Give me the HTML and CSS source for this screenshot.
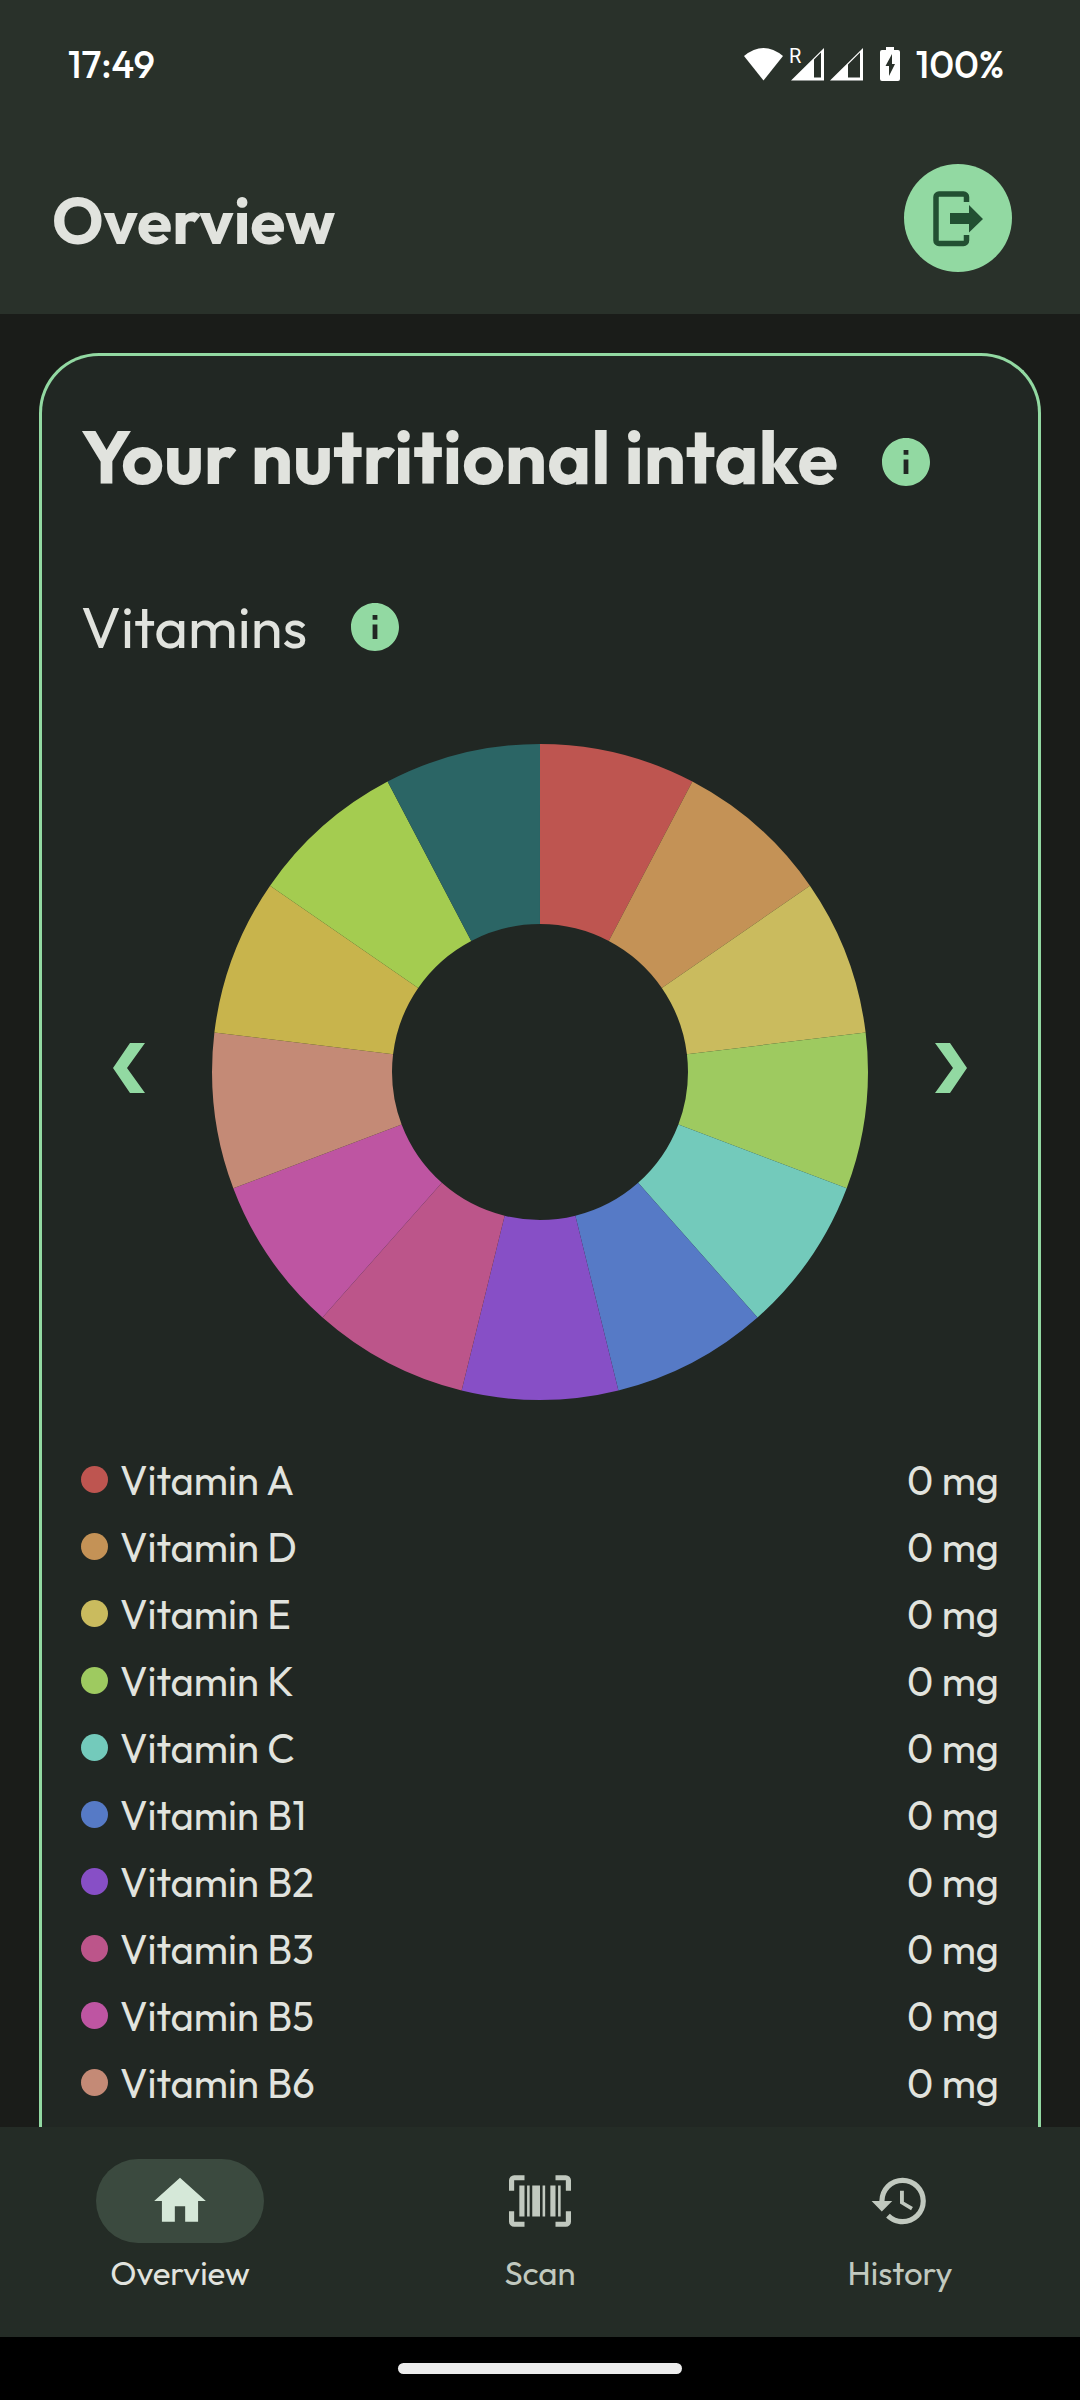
FILE: index.html
```html
<!DOCTYPE html>
<html lang="en">
<head>
<meta charset="utf-8">
<meta name="viewport" content="width=device-width, initial-scale=1">
<title>Overview</title>
<link rel="stylesheet" href="styles.css">
</head>
<body>
<header class="header">
  <div class="status">
    <span class="status-text">17:49</span>
    <div class="status-icons">
      <svg class="signals" width="120" height="36" viewBox="0 0 120 36" fill="#fff" aria-hidden="true">
        <path d="M0 10Q19.500-6 39 10L19.500 34.500Z"/>
        <text x="45" y="17" class="roaming">R</text>
        <path fill-rule="evenodd" d="M47 34.500 80 2v32.500ZM70 13.500v18h7v-25Z"/>
        <path fill-rule="evenodd" d="M86 34.500 119 2v32.500ZM104 18.500v13h12v-25Z"/>
      </svg>
      <svg width="20" height="36" viewBox="0 0 20 36" fill="#fff" aria-hidden="true">
        <path fill-rule="evenodd" d="M6 1h8v3h4a2 2 0 0 1 2 2v27a2 2 0 0 1-2 2H2a2 2 0 0 1-2-2V6a2 2 0 0 1 2-2h4ZM12 8 5.500 20H9v10l6-12h-3Z"/>
      </svg>
      <span class="status-text">100%</span>
    </div>
  </div>
  <div class="app-bar">
    <h1 class="app-title">Overview</h1>
    <button class="logout" type="button" aria-label="Log out">
      <svg width="108" height="108" viewBox="0 0 108 108" aria-hidden="true">
        <path d="M62.500 38V33a3 3 0 0 0-3-3H35a3 3 0 0 0-3 3v43.500a3 3 0 0 0 3 3h24.500a3 3 0 0 0 3-3V71" fill="none" stroke="#225032" stroke-width="5.500"/>
        <path d="M46 49h19v-8l14 14-14 13.500V60H46Z" fill="#225032"/>
      </svg>
    </button>
  </div>
</header>

<main class="content">
  <section class="card">
    <div class="heading">
      <h2 class="card-title">Your nutritional intake</h2>
      <button class="info" type="button" aria-label="About nutritional intake">
        <svg width="48" height="48" viewBox="2 2 20 20" aria-hidden="true"><path fill="#92d9a2" d="M12 2C6.480 2 2 6.480 2 12s4.480 10 10 10 10-4.480 10-10S17.520 2 12 2zm1 15h-2v-6h2v6zm0-8h-2V7h2v2z"/></svg>
      </button>
    </div>
    <div class="heading">
      <h3 class="group-title">Vitamins</h3>
      <button class="info" type="button" aria-label="About vitamins">
        <svg width="48" height="48" viewBox="2 2 20 20" aria-hidden="true"><path fill="#92d9a2" d="M12 2C6.480 2 2 6.480 2 12s4.480 10 10 10 10-4.480 10-10S17.520 2 12 2zm1 15h-2v-6h2v6zm0-8h-2V7h2v2z"/></svg>
      </button>
    </div>
    <div class="carousel">
      <button class="arrow" type="button" aria-label="Previous">
        <svg width="32" height="50" viewBox="0 0 32 50" aria-hidden="true"><path fill="#92d9a2" d="M17 0h15L14 25l18 25H17L0 25Z"/></svg>
      </button>
      <svg class="chart" viewBox="0 0 656 656" role="img" aria-label="Vitamin intake">
        <g class="slices" transform="rotate(-90 328 328)">
          <circle cx="328" cy="328" r="238" pathLength="13" stroke="#be5550"/>
          <circle cx="328" cy="328" r="238" pathLength="13" stroke="#c49256" stroke-dashoffset="-1"/>
          <circle cx="328" cy="328" r="238" pathLength="13" stroke="#cabb5e" stroke-dashoffset="-2"/>
          <circle cx="328" cy="328" r="238" pathLength="13" stroke="#9eca60" stroke-dashoffset="-3"/>
          <circle cx="328" cy="328" r="238" pathLength="13" stroke="#73cabb" stroke-dashoffset="-4"/>
          <circle cx="328" cy="328" r="238" pathLength="13" stroke="#567ac6" stroke-dashoffset="-5"/>
          <circle cx="328" cy="328" r="238" pathLength="13" stroke="#874fc6" stroke-dashoffset="-6"/>
          <circle cx="328" cy="328" r="238" pathLength="13" stroke="#bc558a" stroke-dashoffset="-7"/>
          <circle cx="328" cy="328" r="238" pathLength="13" stroke="#be55a2" stroke-dashoffset="-8"/>
          <circle cx="328" cy="328" r="238" pathLength="13" stroke="#c48a76" stroke-dashoffset="-9"/>
          <circle cx="328" cy="328" r="238" pathLength="13" stroke="#c8b44c" stroke-dashoffset="-10"/>
          <circle cx="328" cy="328" r="238" pathLength="13" stroke="#a4cc50" stroke-dashoffset="-11"/>
          <circle cx="328" cy="328" r="238" pathLength="13" stroke="#2b6565" stroke-dashoffset="-12"/>
        </g>
      </svg>
      <button class="arrow" type="button" aria-label="Next">
        <svg width="32" height="50" viewBox="0 0 32 50" aria-hidden="true"><path fill="#92d9a2" d="M15 0H0l18 25L0 50h15l17-25Z"/></svg>
      </button>
    </div>
    <ul class="legend">
      <li class="row"><span class="dot vit-a"></span><span class="name">Vitamin A</span><span>0 mg</span></li>
      <li class="row"><span class="dot vit-d"></span><span class="name">Vitamin D</span><span>0 mg</span></li>
      <li class="row"><span class="dot vit-e"></span><span class="name">Vitamin E</span><span>0 mg</span></li>
      <li class="row"><span class="dot vit-k"></span><span class="name">Vitamin K</span><span>0 mg</span></li>
      <li class="row"><span class="dot vit-c"></span><span class="name">Vitamin C</span><span>0 mg</span></li>
      <li class="row"><span class="dot vit-b1"></span><span class="name">Vitamin B1</span><span>0 mg</span></li>
      <li class="row"><span class="dot vit-b2"></span><span class="name">Vitamin B2</span><span>0 mg</span></li>
      <li class="row"><span class="dot vit-b3"></span><span class="name">Vitamin B3</span><span>0 mg</span></li>
      <li class="row"><span class="dot vit-b5"></span><span class="name">Vitamin B5</span><span>0 mg</span></li>
      <li class="row"><span class="dot vit-b6"></span><span class="name">Vitamin B6</span><span>0 mg</span></li>
    </ul>
  </section>
</main>

<nav class="tabs">
  <a class="tab active" href="#overview" aria-current="page">
    <span class="pill"><svg width="62" height="62" viewBox="0 0 24 24" fill="currentColor" aria-hidden="true"><path d="M10 20v-6h4v6h5v-8h3L12 3 2 12h3v8z"/></svg></span>
    <span>Overview</span>
  </a>
  <a class="tab" href="#scan">
    <span class="pill"><svg width="62" height="62" viewBox="0 0 24 24" fill="currentColor" aria-hidden="true"><path d="M4 6H6V18H4V6M7 6H8V18H7V6M9 6H12V18H9V6M13 6H14V18H13V6M16 6H18V18H16V6M19 6H20V18H19V6M2 4V8H0V4A2 2 0 0 1 2 2H6V4H2M22 2A2 2 0 0 1 24 4V8H22V4H18V2H22M2 16V20H6V22H2A2 2 0 0 1 0 20V16H2M22 20V16H24V20A2 2 0 0 1 22 22H18V20H22Z"/></svg></span>
    <span>Scan</span>
  </a>
  <a class="tab" href="#history">
    <span class="pill"><svg width="62" height="62" viewBox="0 0 24 24" fill="currentColor" aria-hidden="true"><path d="M13.500 8H12V13L16.280 15.540L17 14.330L13.500 12.250V8M13 3A9 9 0 0 0 4 12H1L4.960 16.030L9 12H6A7 7 0 0 1 13 5A7 7 0 0 1 20 12A7 7 0 0 1 13 19C11.070 19 9.320 18.210 8.060 16.940L6.640 18.360C8.270 20 10.500 21 13 21A9 9 0 0 0 22 12A9 9 0 0 0 13 3"/></svg></span>
    <span>History</span>
  </a>
</nav>
<footer class="gesture-bar"><div class="handle"></div></footer>
</body>
</html>
```
FILE: styles.css
```css
* {
  box-sizing: border-box;
}

body {
  margin: 0;
  height: 100vh;
  display: flex;
  flex-direction: column;
  background: #1a1c19;
  color: #e1e3de;
  font-family: Outfit, Lato, "Open Sans", sans-serif;
}

h1, h2, h3, ul {
  margin: 0;
  padding: 0;
}

button {
  display: flex;
  padding: 0;
  border: 0;
  background: none;
  cursor: pointer;
}

svg {
  display: block;
  flex: none;
}

/* Top */
.header {
  flex: none;
  padding-bottom: 42px;
  background: #29312a;
}

.status {
  display: flex;
  align-items: center;
  justify-content: space-between;
  height: 128px;
  padding: 0 76px 0 68px;
  color: #fff;
}

.status-icons {
  display: flex;
  align-items: center;
  gap: 16px;
}

.status-text {
  font-size: 38px;
  line-height: 44px;
  font-weight: 500;
}

.signals {
  overflow: visible;
}

.roaming {
  font-family: Roboto, sans-serif;
  font-size: 20px;
}

.app-bar {
  display: flex;
  align-items: center;
  justify-content: space-between;
  padding: 36px 68px 0 52px;
}

.app-title {
  padding-top: 6px;
  font-size: 64px;
  line-height: 80px;
  font-weight: 700;
}

.logout {
  border-radius: 50%;
  background: #92d9a2;
}

/* Card */
.content {
  flex: 1;
  min-height: 0;
  overflow: hidden;
  display: flex;
  padding: 39px 39px 0;
}

.card {
  flex: 1;
  padding: 58px 39px 0;
  border: 3px solid #92d9a2;
  border-bottom: 0;
  border-radius: 60px 60px 0 0;
  background: #212723;
}

.heading {
  display: flex;
  align-items: center;
  gap: 44px;
  height: 96px;
  margin-bottom: 69px;
}

.card-title {
  padding-bottom: 10px;
  font-size: 74px;
  line-height: 86px;
  font-weight: 700;
}

.group-title {
  font-size: 58px;
  line-height: 80px;
  font-weight: 400;
}

.carousel {
  display: flex;
  align-items: center;
  justify-content: space-between;
  padding: 0 32px;
}

.arrow {
  padding-bottom: 8px;
}

.chart {
  flex: 0 1 656px;
  min-width: 0;
}

.slices circle {
  fill: none;
  stroke-width: 180px;
  stroke-dasharray: 1 12;
}

.legend {
  margin-top: 46px;
  list-style: none;
}

.row {
  display: flex;
  align-items: center;
  gap: 12px;
  height: 67px;
  font-size: 40px;
  line-height: 48px;
}

.name {
  flex: 1;
}

.dot {
  width: 27px;
  height: 27px;
  border-radius: 50%;
}

.vit-a { background: #be5550; }
.vit-d { background: #c49256; }
.vit-e { background: #cabb5e; }
.vit-k { background: #9eca60; }
.vit-c { background: #73cabb; }
.vit-b1 { background: #567ac6; }
.vit-b2 { background: #874fc6; }
.vit-b3 { background: #bc558a; }
.vit-b5 { background: #be55a2; }
.vit-b6 { background: #c48a76; }

/* Bottom */
.tabs {
  flex: none;
  display: flex;
  padding: 32px 0 42px;
  background: #242c26;
}

.tab {
  flex: 1;
  display: flex;
  flex-direction: column;
  align-items: center;
  gap: 8px;
  color: #c1c9bf;
  font-size: 33px;
  line-height: 44px;
  text-decoration: none;
}

.pill {
  display: flex;
  align-items: center;
  justify-content: center;
  width: 168px;
  height: 84px;
  border-radius: 42px;
}

.active {
  color: #e1e3de;
}

.active .pill {
  background: #3b4a3f;
  color: #d5e8d8;
}

.gesture-bar {
  flex: none;
  display: flex;
  align-items: center;
  justify-content: center;
  height: 63px;
  background: #000;
}

.handle {
  width: 284px;
  height: 11px;
  border-radius: 6px;
  background: #ececec;
}
```
